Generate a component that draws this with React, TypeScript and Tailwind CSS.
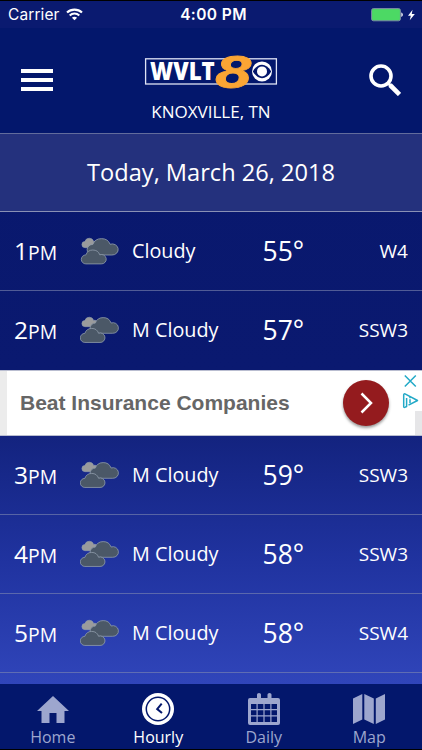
import { FC, ReactNode } from "react";
import clsx from "clsx";

interface Hour {
  hour: number;
  sky: string;
  temp: number;
  wind: string;
}

const beforeAd: Hour[] = [
  { hour: 1, sky: "Cloudy", temp: 55, wind: "W4" },
  { hour: 2, sky: "M Cloudy", temp: 57, wind: "SSW3" },
];

const afterAd: Hour[] = [
  { hour: 3, sky: "M Cloudy", temp: 59, wind: "SSW3" },
  { hour: 4, sky: "M Cloudy", temp: 58, wind: "SSW3" },
  { hour: 5, sky: "M Cloudy", temp: 58, wind: "SSW4" },
];

const StatusBar = () => (
  <div className="h-7 shrink-0 grid grid-cols-3 items-center border-t border-black bg-[#0a1a70] pl-2 pr-[7px] font-['Inter',sans-serif]">
    <div className="flex items-center gap-[6px]">
      <span className="text-[15.5px] leading-none tracking-[0.1px]">Carrier</span>
      <svg width="17" height="13" viewBox="0 0 17 13" fill="none" stroke="#fff">
        <path d="M1 4.6C5.2.6 11.8.6 16 4.6" strokeWidth="2.1" />
        <path d="M3.7 7.4c2.7-2.5 6.9-2.5 9.6 0" strokeWidth="2.1" />
        <path d="M8.5 12.3 5.9 9.7c1.4-1.4 3.8-1.4 5.2 0z" fill="#fff" stroke="none" />
      </svg>
    </div>
    <span className="text-center text-[15.5px] font-semibold leading-none tracking-[0.4px] whitespace-nowrap pl-1">
      4:00 PM
    </span>
    <div className="flex items-center justify-end gap-[5px]">
      <svg width="32" height="14" viewBox="0 0 32 14">
        <rect x=".6" y=".6" width="28.8" height="12.2" rx="1.8" fill="#4cd964" stroke="#7b8aa6" />
        <path d="M30.3 4.5c2 .7 2 3.7 0 4.4z" fill="#fff" />
      </svg>
      <svg width="7" height="12" viewBox="0 0 8 12" fill="#fff">
        <path d="M5.2 0 0 6.8h3.2L2 12l5.8-7.2H4.3z" />
      </svg>
    </div>
  </div>
);

const Logo = () => (
  <svg width="134" height="54" viewBox="0 -8 134 54" className="block">
    <rect x="1.6" y="5.8" width="130.8" height="25.2" fill="none" stroke="#dfe3f5" strokeWidth="1.3" />
    <text
      x="6"
      y="27"
      fill="#fff"
      fontFamily="Open Sans, sans-serif"
      fontWeight="800"
      fontSize="24.5"
      textLength="64.8"
      lengthAdjust="spacingAndGlyphs"
    >
      WVLT
    </text>
    <text
      x="71.2"
      y="34.7"
      fill="#fba534"
      stroke="#fba534"
      strokeWidth=".8"
      fontFamily="Liberation Sans, sans-serif"
      fontWeight="700"
      fontStyle="italic"
      fontSize="46.5"
      textLength="36"
      lengthAdjust="spacingAndGlyphs"
    >
      8
    </text>
    <circle cx="118" cy="18.4" r="10" fill="#fff" />
    <path d="M108.8 18.4c5-9 13.4-9 18.4 0-5 9-13.4 9-18.4 0z" fill="#03176c" />
    <circle cx="118" cy="18.4" r="5" fill="#fff" />
  </svg>
);

const Header = () => (
  <header className="h-[105px] shrink-0 flex justify-between bg-[#03176c] px-[21px]">
    <button className="mt-[41px] flex h-[22px] w-8 flex-col justify-between">
      <span className="h-1 w-full bg-white" />
      <span className="h-1 w-full bg-white" />
      <span className="h-1 w-full bg-white" />
    </button>
    <div className="flex flex-col items-center pt-[17px]">
      <Logo />
      <p className="mt-px text-[17px] leading-6 whitespace-nowrap">KNOXVILLE, TN</p>
    </div>
    <button className="mt-9 h-8 w-8">
      <svg width="32" height="32" viewBox="0 0 32 32" fill="none" stroke="#fff">
        <circle cx="12" cy="12" r="10" strokeWidth="3.6" />
        <path d="m19 19 2.5 2.5" strokeWidth="3" />
        <path d="m21 21 9.5 9.5" strokeWidth="4.6" />
      </svg>
    </button>
  </header>
);

const puff =
  "M5 14.5A4.5 4.5 0 0 1 5 5.5A7.2 7.2 0 0 1 18.6 5.4A4.7 4.7 0 1 1 20 14.5Z";

const CloudIcon: FC<{ overcast: boolean }> = ({ overcast }) => (
  <svg width="40" height="28" viewBox="0 0 40 28" stroke="#8f9baa">
    <path d={puff} transform="translate(1.6 .8) scale(.65 .68)" fill="#9a9b9c" strokeWidth="1" />
    <path
      d={puff}
      transform={overcast ? "translate(6.5 .9) scale(1.27 1.18)" : "translate(9.5 .9) scale(1.16 1.13)"}
      fill="#4b5867"
      strokeWidth=".7"
    />
    <path
      d={puff}
      transform={overcast ? "translate(.8 12.4) scale(1.02 1)" : "translate(-.2 11.8) scale(1.01 1.01)"}
      fill="#4b5867"
      strokeWidth=".8"
    />
  </svg>
);

const HourRow: FC<{ data: Hour; last?: boolean }> = ({ data, last = false }) => (
  <div
    className={clsx(
      "h-[79px] shrink-0 flex items-center border-b px-3.5 whitespace-nowrap",
      last ? "border-transparent" : "border-[#8188b0]/60"
    )}
  >
    <div className="w-[66px] text-[24.5px]">
      {data.hour}
      <span className="text-[19.4px]">PM</span>
    </div>
    <CloudIcon overcast={data.sky === "Cloudy"} />
    <div className="w-[142.5px] pl-3 text-[19.8px]">{data.sky}</div>
    <div className="pt-px text-[26.5px]">{data.temp}°</div>
    <div className="ml-auto text-[19px]">{data.wind}</div>
  </div>
);

const AdBanner = () => (
  <div className="h-[66px] shrink-0 flex justify-between border-y border-[#b9bdd0] bg-white">
    <div className="w-[7px] bg-[#ececec]" />
    <p className="flex-1 self-center whitespace-nowrap pb-px pl-[13px] font-['Liberation_Sans',sans-serif] text-[21px] font-bold text-[#666]">
      Beat Insurance Companies
    </p>
    <div className="self-center mb-px mr-[13px] flex h-[46px] w-[46px] items-center justify-center rounded-full bg-[#941b1e] shadow-[0_2px_3px_rgba(0,0,0,0.4)]">
      <svg width="14" height="22" viewBox="0 0 14 22" fill="none" stroke="#fff" strokeWidth="2.5">
        <path d="m2.5 1.5 9.5 9.5-9.5 9.5" />
      </svg>
    </div>
    <div className="flex w-5 flex-col items-end">
      <svg
        width="20"
        height="40"
        viewBox="0 0 20 40"
        fill="none"
        stroke="#22a9c7"
        strokeWidth="1.5"
        className="shrink-0"
      >
        <path d="m2.8 4.5 11 11m0-11-11 11" />
        <path
          d="M6.5 34.2 15.500 29.500 3 22.900Q1.700 22.500 1.700 24v11.500Q1.700 37 3.300 36.200L4.600 35.500V27"
          strokeLinejoin="round"
        />
        <path d="M8 28.300v4M8 26v1.300" />
      </svg>
      <div className="w-[7px] flex-1 bg-[#e6e6e8]" />
    </div>
  </div>
);

const HomeIcon = () => (
  <svg width="32" height="32" viewBox="0 0 32 32" fill="currentColor">
    <path d="M16 3 32 18h-4.5v12h-8V20h-7v10h-8V18H0z" />
  </svg>
);

const ClockIcon = () => (
  <svg width="32" height="32" viewBox="0 0 32 32">
    <circle cx="16" cy="16" r="16" fill="#fff" />
    <circle cx="16" cy="16" r="11.7" fill="none" stroke="#03176c" strokeWidth="1.5" />
    <path d="m19.7 10.7-4.5 5.4 4.8 4" fill="none" stroke="#03176c" strokeWidth="2" />
  </svg>
);

const CalendarIcon = () => (
  <svg width="32" height="32" viewBox="0 0 32 32" fill="currentColor">
    <path
      fillRule="evenodd"
      d="M2 5h7V1.5Q9 0 11 0t2 1.5V5h6.5V1.5Q19.5 0 21.5 0t2 1.5V5H30q2 0 2 2v23q0 2-2 2H2q-2 0-2-2V7q0-2 2-2zM3 11v5h5.5v-5zm6.700 0v5h5.700v-5zm6.900 0v5h5.700v-5zm6.900 0v5H29v-5zM3 17.300v5h5.500v-5zm6.700 0v5h5.700v-5zm6.900 0v5h5.700v-5zm6.900 0v5H29v-5zM3 23.600v5.400h5.500v-5.400zm6.700 0v5.400h5.700v-5.400zm6.900 0v5.400h5.700v-5.400zm6.900 0v5.400H29v-5.400z"
    />
  </svg>
);

const MapIcon = () => (
  <svg width="32" height="32" viewBox="0 0 32 32" fill="currentColor">
    <path d="M0 5.5 9.3 1v25.5L0 31zM11.3 1l9.5 4.5V31l-9.5-4.5zM22.8 5.5 32 1v25.5L22.8 31z" />
  </svg>
);

const Tab: FC<{ label: string; active?: boolean; children: ReactNode }> = ({
  label,
  active = false,
  children,
}) => (
  <button
    className={clsx(
      "flex flex-col items-center pt-[9px]",
      active ? "text-white" : "text-[#9da6ce]"
    )}
  >
    {children}
    <span className="mt-px text-[16px] leading-[22px]">{label}</span>
  </button>
);

const App = () => {
  return (
    <div className="flex h-[750px] w-[422px] flex-col overflow-hidden bg-[#03176c] font-['Open_Sans',sans-serif] text-white">
      <StatusBar />
      <Header />
      <main className="flex flex-1 min-h-0 flex-col overflow-hidden bg-[linear-gradient(180deg,#09186d_0%,#0a1970_43%,#13237f_55%,#2033a0_78%,#3045ba_100%)]">
        <div className="h-[79px] shrink-0 flex items-center justify-center border-y border-t-[#626c9c] border-b-[#8990b5] bg-[#24317d] text-[23.6px]">
          Today, March 26, 2018
        </div>
        {beforeAd.map((data, idx) => (
          <HourRow key={data.hour} data={data} last={idx === beforeAd.length - 1} />
        ))}
        <AdBanner />
        {afterAd.map((data) => (
          <HourRow key={data.hour} data={data} />
        ))}
      </main>
      <nav className="h-[66px] shrink-0 grid grid-cols-4 border-b border-black bg-[#03176c]">
        <Tab label="Home">
          <HomeIcon />
        </Tab>
        <Tab label="Hourly" active>
          <ClockIcon />
        </Tab>
        <Tab label="Daily">
          <CalendarIcon />
        </Tab>
        <Tab label="Map">
          <MapIcon />
        </Tab>
      </nav>
    </div>
  );
};

export default App;
